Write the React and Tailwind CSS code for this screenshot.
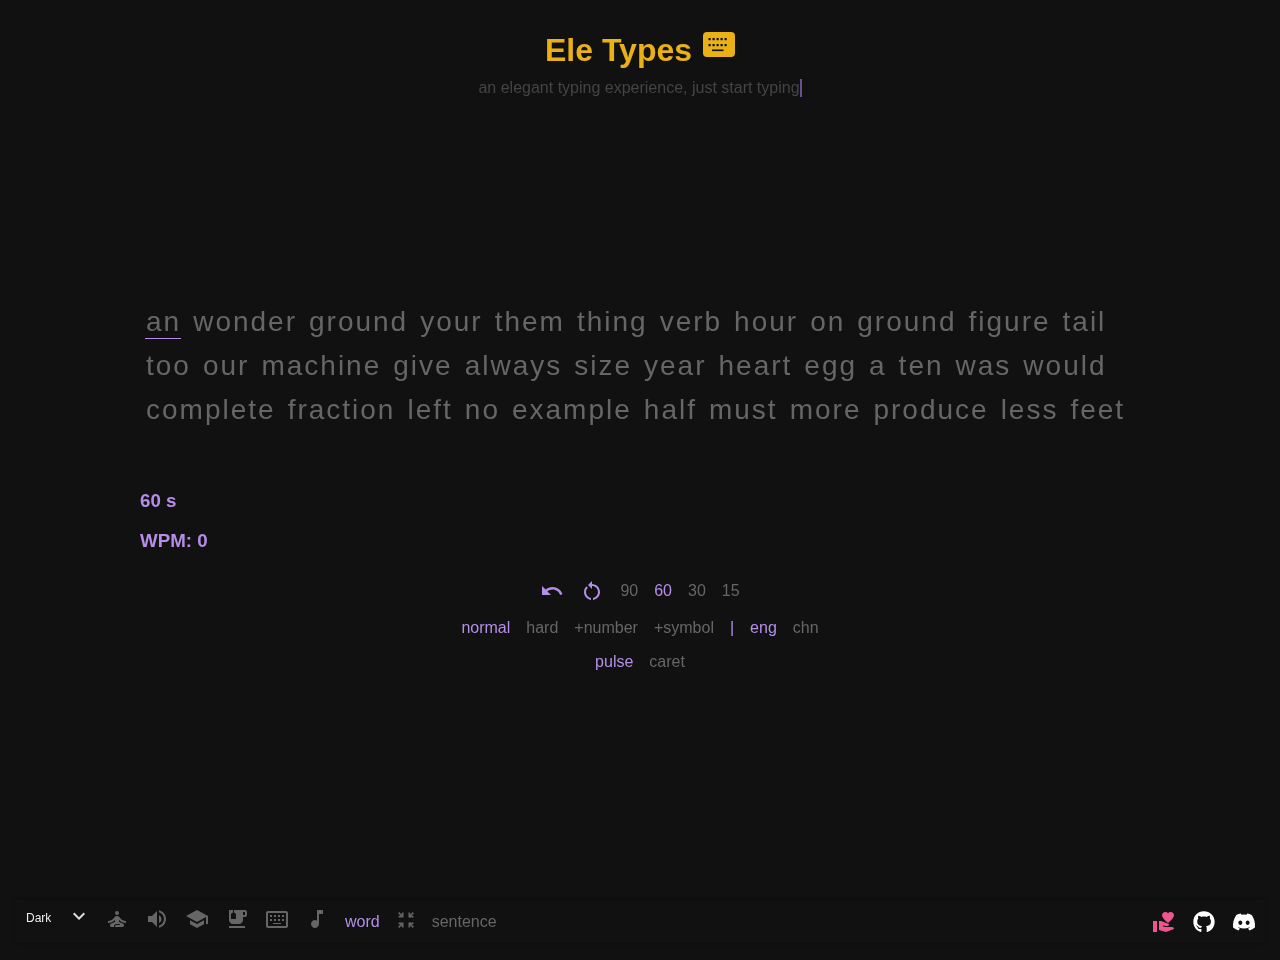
import React from "react";
import {
  MdKeyboardArrowDown,
  MdUndo,
  MdRestartAlt,
  MdSelfImprovement,
  MdVolumeUp,
  MdSchool,
  MdEmojiFoodBeverage,
  MdOutlineKeyboardAlt,
  MdMusicNote,
  MdZoomInMap,
  MdVolunteerActivism,
} from "react-icons/md";
import { FaGithub, FaDiscord } from "react-icons/fa";

const WORDS =
  "an wonder ground your them thing verb hour on ground figure tail too our machine give always size year heart egg a ten was would complete fraction left no example half must more produce less feet".split(
    " "
  );

const FOOTER_ICONS = [
  MdSelfImprovement,
  MdVolumeUp,
  MdSchool,
  MdEmojiFoodBeverage,
  MdOutlineKeyboardAlt,
  MdMusicNote,
];

function Option({ active, children }) {
  return (
    <button className={active ? "text-[#b58ee8]" : "text-[#666666]"}>
      {children}
    </button>
  );
}

// title logo, keys sit a bit left of center like the original
function LogoKeyboard() {
  return (
    <svg viewBox="0 0 32 25" className="w-[32px] h-[25px] ml-[11px] mt-[4px]">
      <rect width="32" height="25" rx="4" fill="#e9b116" />
      <g fill="#111111">
        {[5.5, 9.5, 13.5, 17.5, 21.5].map((x) => (
          <React.Fragment key={x}>
            <rect x={x} y="6" width="2.2" height="2.2" />
            <rect x={x} y="12" width="2.2" height="2.2" />
          </React.Fragment>
        ))}
        <rect x="9" y="17.5" width="11.5" height="1.6" />
      </g>
    </svg>
  );
}

export default function App() {
  return (
    <div className="bg-[#111111]">
      <div className="h-screen flex flex-col will-change-transform font-['Liberation_Sans',Arial,sans-serif] overflow-hidden">
        <header className="flex flex-col items-center pt-[28px]">
          <div className="flex items-start h-[44px]">
            <h1 className="text-[32px] leading-[44px] font-bold text-[#e9b116]">
              Ele Types
            </h1>
            <LogoKeyboard />
          </div>
          <p className="mt-[4px] text-base leading-[24px] text-[#444444] flex">
            an elegant typing experience, just start typing
            <span className="w-[2px] h-[18px] mt-[3px] bg-[#6b4f94]" />
          </p>
        </header>

        <main className="flex-1">
          <div className="w-[1000px] mx-auto mt-[200px] flex flex-wrap text-[28px] leading-[44px] tracking-[2px] text-[#666666]">
            {WORDS.map((word, i) => (
              <span key={i} className="relative mx-[6px]">
                {word}
                {i === 0 && (
                  <span className="absolute -left-px right-0 bottom-[5px] h-px bg-[#b58ee8]" />
                )}
              </span>
            ))}
          </div>

          <div className="w-[1000px] mx-auto mt-[49px] text-[18.72px] font-bold leading-[40px] text-[#b58ee8]">
            <div>60 s</div>
            <div>WPM: 0</div>
          </div>

          <div className="mt-[13px] flex flex-col items-center text-base">
            <div className="flex items-center h-[34px]">
              <MdUndo className="w-[24px] h-[24px] text-[#b58ee8]" />
              <MdRestartAlt className="w-[24px] h-[24px] ml-[16px] mr-[16px] text-[#b58ee8]" />
              <div className="flex gap-[16px]">
                <Option>90</Option>
                <Option active>60</Option>
                <Option>30</Option>
                <Option>15</Option>
              </div>
            </div>
            <div className="flex items-center gap-[16px] h-[34px] mt-[3px]">
              <Option active>normal</Option>
              <Option>hard</Option>
              <Option>+number</Option>
              <Option>+symbol</Option>
              <span className="text-[#b58ee8]">|</span>
              <Option active>eng</Option>
              <Option>chn</Option>
            </div>
            <div className="flex items-center gap-[16px] h-[34px]">
              <Option active>pulse</Option>
              <Option>caret</Option>
            </div>
          </div>
        </main>

        <footer className="mx-[16px] mb-[17px] h-[43px] flex items-center justify-between bg-[#111111] shadow-[0_0_4px_rgba(0,0,0,0.3)]">
          <div className="flex items-center">
            <div className="relative w-[72px] ml-[6px] -mt-[9px]">
              <select className="w-full pl-[4px] appearance-none bg-transparent text-xs text-[#eeeeee] outline-none">
                <option className="bg-[#111111]">Dark</option>
              </select>
              <MdKeyboardArrowDown className="absolute left-[45px] -top-[1px] w-[24px] h-[24px] text-[#dddddd] pointer-events-none" />
            </div>
            <div className="flex items-center ml-[3px]">
              {FOOTER_ICONS.map((Icon, i) => (
                <span key={i} className="w-[40px] flex justify-center">
                  <Icon className="w-[24px] h-[24px] text-[#666666] -mt-[6px]" />
                </span>
              ))}
            </div>
            <div className="flex items-center ml-[8px] text-base">
              <Option active>word</Option>
              <MdZoomInMap className="w-[20px] h-[20px] mx-[16px] text-[#666666] -mt-[4px]" />
              <Option>sentence</Option>
            </div>
          </div>
          <div className="flex items-center gap-[16px] pr-[8px]">
            <MdVolunteerActivism className="w-[24px] h-[24px] text-[#f0558f]" />
            <FaGithub className="w-[22px] h-[22px] mx-px text-white" />
            <FaDiscord className="w-[24px] h-[24px] text-white" />
          </div>
        </footer>
      </div>
    </div>
  );
}
